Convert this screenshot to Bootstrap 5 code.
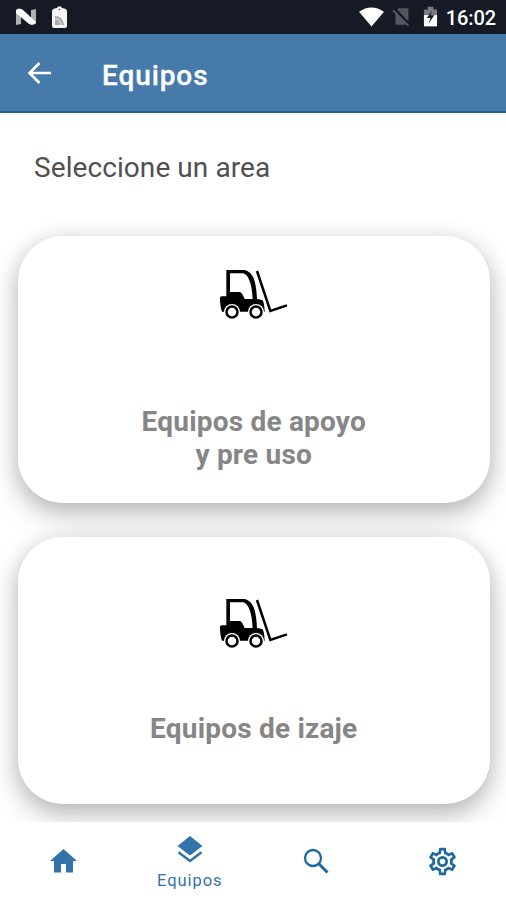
<!DOCTYPE html>
<html lang="es">
<head>
<meta charset="utf-8">
<meta name="viewport" content="width=device-width, initial-scale=1">
<title>Equipos</title>
<link href="https://cdn.jsdelivr.net/npm/bootstrap@5.3.0/dist/css/bootstrap.min.css" rel="stylesheet">
<style>
body{font-family:Roboto,sans-serif;background:#fff}
.screen{height:900px;width:506px}
.status{height:34px;background:#151a24;padding:0 10px 0 14px}
.clock{font-size:20px;line-height:34px;font-weight:500;letter-spacing:-.1px;padding-top:2px}
.appbar{height:79px;background:#467aaa;border-bottom:2px solid #1c6599;padding-left:24px}
.appbar h1{font-size:28px;font-weight:500;letter-spacing:.9px;margin:6px 0 0 47px;line-height:32px;-webkit-text-stroke:.3px #fff}
.appbar svg{margin-top:2px}
.prompt{font-size:28px;line-height:34px;color:#505050;margin:38px 0 51px 34px;letter-spacing:.08px}
.tile{height:267px;margin:0 16px 34px 17.5px;border:0;border-radius:45px;box-shadow:0 11px 28px rgba(0,0,0,.25),0 2px 20px rgba(0,0,0,.09);color:#868686}
.tile h2{font-size:28px;line-height:33px;font-weight:700;margin:0;letter-spacing:.2px}
.tile-a{padding-top:33px}
.tile-a h2{margin-top:86px}
.tile-b{padding-top:61px}
.tile-b h2{margin-top:64px}
.tabs{height:78px;background:#fff;color:#3273aa;z-index:2}
.tabs a{color:inherit}
.tab-label{font-size:16.500px;line-height:20px;letter-spacing:.95px;margin-top:8px;margin-bottom:-5px}
</style>
</head>
<body>
<div class="screen d-flex flex-column overflow-hidden">
  <header class="flex-shrink-0">
    <div class="status d-flex align-items-center justify-content-between text-white">
      <div class="d-flex align-items-center">
        <svg width="24" height="20" viewBox="0 0 24 20"><path d="M2 3l5-1v15l-5 1zM17 3l5-1v15l-5 1z" fill="#aeb0b4"/><path d="M2 3Q5 0 9 3l13 12q-2 4-7 2L2 6z" fill="#fff"/></svg>
        <svg class="ms-2" width="26" height="24" viewBox="0 0 26 24"><path d="M8.500 3.500 11 3l1-1.500h3L16 3l2.500.5Q21 4 21 6v15q0 2-2 2H8q-2 0-2-2V6q0-2 2.500-2.500z" fill="#f4f4f4"/><circle cx="13.500" cy="4.500" r=".8" fill="#555"/><path d="M9 11q8 0 9 9H9z" fill="#aaa"/><path d="M9 14q5 0 6 6" fill="none" stroke="#eee"/></svg>
      </div>
      <div class="d-flex align-items-center">
        <svg width="25" height="22" viewBox="0 0 26 22"><path d="M0 5.500Q13-3.500 26 5.500L13 21z" fill="#fff"/></svg>
        <svg class="ms-2" width="19" height="20" viewBox="0 0 22 22"><path d="M7 1h11q1 0 1 1v18H4V6z" fill="#54575e"/><path d="M2 1l18 19" stroke="#151a24" stroke-width="4"/><path d="M1 3l18 18" stroke="#54575e" stroke-width="2"/></svg>
        <svg class="ms-2 me-1 ps-1" width="19" height="22" viewBox="0 0 16 22"><path d="M1 3h4V0h6v3h4v7H1z" fill="#777a80"/><path d="M1 9h14v12H1z" fill="#fff"/><path d="M10 4l-6 8h4l-2 6 6-9H8z" fill="#151a24"/></svg>
        <span class="clock ms-1">16:02</span>
      </div>
    </div>
    <div class="appbar d-flex align-items-center text-white">
      <svg width="31" height="28" viewBox="0 0 31 28"><path d="M27 13H6M15.500 3 5.500 13l10 10" fill="none" stroke="#fff" stroke-width="2.600"/></svg>
      <h1>Equipos</h1>
    </div>
  </header>
  <main class="flex-grow-1 overflow-hidden">
    <p class="prompt">Seleccione un area</p>
    <section class="card tile tile-a align-items-center text-center">
      <svg width="70" height="50" viewBox="57 40 210 150"><use href="#lift"/></svg>
      <h2>Equipos de apoyo<br>y pre uso</h2>
    </section>
    <section class="card tile tile-b align-items-center text-center">
      <svg width="70" height="50" viewBox="57 40 210 150">
        <g id="lift">
          <path fill-rule="evenodd" d="M79 43h56q18 5 26 25 8 20 10 62l16 3q6 6 7 35h-55H66q-6-14-6-43l4-3h15zM90 53v56h30q7 3 14 21h24q-2-35-9-54-7-19-19-23z" fill="#000"/>
          <circle cx="96" cy="169" r="24" fill="#fff"/><circle cx="168" cy="169" r="24" fill="#fff"/>
          <circle cx="96" cy="169" r="16.500" fill="#fff" stroke="#000" stroke-width="7.500"/><circle cx="168" cy="169" r="16.500" fill="#fff" stroke="#000" stroke-width="7.500"/>
          <path d="M171 46l40 120 50-17" fill="none" stroke="#000" stroke-width="7.500"/>
        </g>
      </svg>
      <h2>Equipos de izaje</h2>
    </section>
  </main>
  <nav class="tabs row g-0 flex-shrink-0 position-relative">
    <a href="#" class="col d-flex align-items-center justify-content-center" aria-label="Inicio"><svg width="27" height="26" viewBox="0 0 27 26"><path d="M13.500 1 0 13h4V24.500h7V16h5v8.500h7V13h4z" fill="currentColor"/></svg></a>
    <a href="#" class="col d-flex flex-column align-items-center justify-content-center text-decoration-none"><svg width="26" height="27" viewBox="0 0 26 27"><path d="M13 0 25.500 10 13 19.500.5 10z" fill="currentColor"/><path d="M1.500 16.200 13 25l11.500-8.800" fill="none" stroke="currentColor" stroke-width="2.500"/></svg><span class="tab-label">Equipos</span></a>
    <a href="#" class="col d-flex align-items-center justify-content-center" aria-label="Buscar"><svg width="26" height="26" viewBox="0 0 26 26"><circle cx="10" cy="10" r="8" fill="none" stroke="#1f699f" stroke-width="2.300"/><path d="M16 16l8.500 8.500" stroke="#1f699f" stroke-width="3"/></svg></a>
    <a href="#" class="col d-flex align-items-center justify-content-center" aria-label="Ajustes"><svg width="33" height="33" viewBox="0 0 24 24" fill="#1f699f"><path d="M12,8A4,4 0 0,1 16,12A4,4 0 0,1 12,16A4,4 0 0,1 8,12A4,4 0 0,1 12,8M12,10A2,2 0 0,0 10,12A2,2 0 0,0 12,14A2,2 0 0,0 14,12A2,2 0 0,0 12,10M10,22C9.75,22 9.54,21.82 9.5,21.58L9.13,18.93C8.5,18.68 7.96,18.34 7.44,17.94L4.95,18.95C4.73,19.03 4.46,18.95 4.34,18.73L2.34,15.27C2.21,15.05 2.27,14.78 2.46,14.63L4.57,12.97L4.5,12L4.57,11L2.46,9.37C2.27,9.22 2.21,8.95 2.34,8.73L4.34,5.27C4.46,5.05 4.73,4.96 4.95,5.05L7.44,6.05C7.96,5.66 8.5,5.32 9.13,5.07L9.5,2.42C9.54,2.18 9.75,2 10,2H14C14.25,2 14.46,2.18 14.5,2.42L14.87,5.07C15.5,5.32 16.04,5.66 16.56,6.05L19.05,5.05C19.27,4.96 19.54,5.05 19.66,5.27L21.66,8.73C21.79,8.95 21.73,9.22 21.54,9.37L19.43,11L19.5,12L19.43,13L21.54,14.63C21.73,14.78 21.79,15.05 21.66,15.27L19.66,18.73C19.54,18.95 19.27,19.04 19.05,18.95L16.56,17.95C16.04,18.34 15.5,18.68 14.87,18.93L14.5,21.58C14.46,21.82 14.25,22 14,22H10M11.25,4L10.88,6.61C9.68,6.86 8.62,7.5 7.85,8.39L5.44,7.35L4.69,8.65L6.8,10.2C6.4,11.37 6.4,12.64 6.8,13.8L4.68,15.36L5.43,16.66L7.86,15.62C8.63,16.5 9.68,17.14 10.87,17.38L11.24,20H12.76L13.13,17.39C14.32,17.14 15.37,16.5 16.14,15.62L18.57,16.66L19.32,15.36L17.2,13.81C17.6,12.64 17.6,11.37 17.2,10.2L19.31,8.65L18.56,7.35L16.15,8.39C15.38,7.5 14.32,6.86 13.12,6.61L12.75,4H11.25Z"/></svg></a>
  </nav>
</div>
<script src="https://cdn.jsdelivr.net/npm/bootstrap@5.3.0/dist/js/bootstrap.bundle.min.js"></script>
</body>
</html>
